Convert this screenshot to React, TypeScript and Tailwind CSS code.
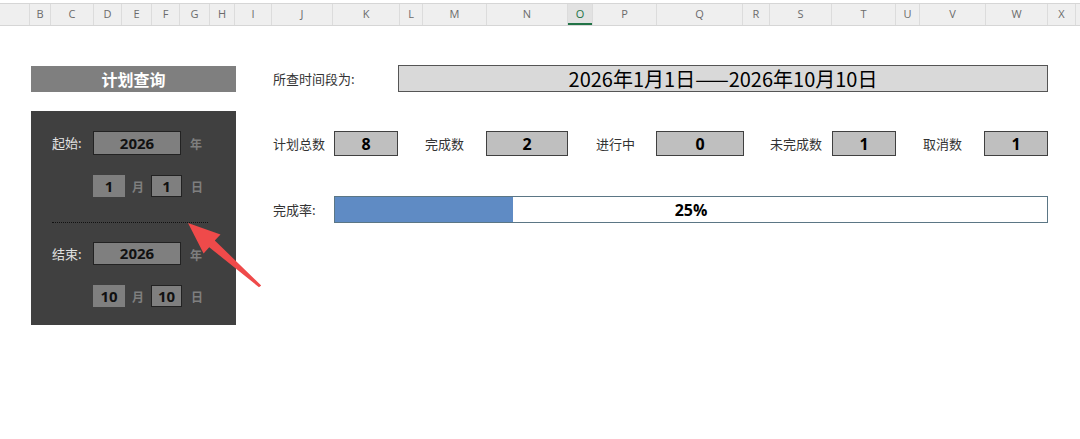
import React from "react";

const cols: { label: string; cls: string }[] = [
  { label: "", cls: "w-[30px]" },
  { label: "B", cls: "w-[21px]" },
  { label: "C", cls: "w-[43px]" },
  { label: "D", cls: "w-[28px]" },
  { label: "E", cls: "w-[30px]" },
  { label: "F", cls: "w-[28px]" },
  { label: "G", cls: "w-[30px]" },
  { label: "H", cls: "w-[25px]" },
  { label: "I", cls: "w-[37px]" },
  { label: "J", cls: "w-[61px]" },
  { label: "K", cls: "w-[67px]" },
  { label: "L", cls: "w-[23px]" },
  { label: "M", cls: "w-[64px]" },
  { label: "N", cls: "w-[81px]" },
  { label: "O", cls: "w-[25px]" },
  { label: "P", cls: "w-[64px]" },
  { label: "Q", cls: "w-[86px]" },
  { label: "R", cls: "w-[27px]" },
  { label: "S", cls: "w-[62px]" },
  { label: "T", cls: "w-[64px]" },
  { label: "U", cls: "w-[24px]" },
  { label: "V", cls: "w-[66px]" },
  { label: "W", cls: "w-[62px]" },
  { label: "X", cls: "w-[28px]" },
];

const cjk = "font-['Noto_Sans_CJK_SC',sans-serif]";
const num = "font-['Open_Sans','Noto_Sans_CJK_SC',sans-serif]";

function Header() {
  return (
    <div className="pt-[3px]">
      <div className="flex h-[23px] bg-[#efefef] border-t border-b border-[#d6d6d6]">
        {cols.map((c, i) => {
          const sel = c.label === "O";
          return (
            <div
              key={i}
              className={`${c.cls} shrink-0 h-full flex items-center justify-center border-r border-[#dcdcdc] text-[11px] font-['Open_Sans',sans-serif] relative ${
                sel ? "bg-[#e2e2e2] text-[#217346]" : "text-[#6b6b6b]"
              }`}
            >
              {c.label}
              {sel && <div className="absolute left-0 right-0 bottom-0 h-[2px] bg-[#217346]" />}
            </div>
          );
        })}
        <div className="flex-1" />
      </div>
    </div>
  );
}

function GrayBox({ w, children, border = true }: { w: string; children: React.ReactNode; border?: boolean }) {
  return (
    <div
      className={`${w} h-full bg-[#7f7f7f] flex items-center justify-center text-[15px] font-bold text-[#111] ${num} ${
        border ? "border border-[#222]" : ""
      }`}
    >
      {children}
    </div>
  );
}

function Unit({ children }: { children: React.ReactNode }) {
  return <span className={`text-[12px] font-bold text-[#7f7f7f] ${cjk}`}>{children}</span>;
}

function LeftPanel() {
  return (
    <div className="ml-[31px] w-[205px] shrink-0 pt-[40px]">
      <div className={`h-[26px] bg-[#7f7f7f] flex items-center justify-center text-white font-bold text-[16px] ${cjk}`}>
        计划查询
      </div>
      <div className="mt-[19px] bg-[#404040] h-[214px] pt-[20px]">
        <div className="flex items-center h-[24px]">
          <div className={`w-[62px] pl-[21px] text-[13px] text-[#e2e2e2] ${cjk}`}>起始:</div>
          <GrayBox w="w-[88px]">2026</GrayBox>
          <div className="ml-[9px]">
            <Unit>年</Unit>
          </div>
        </div>
        <div className="flex items-center h-[22px] mt-[20px] pl-[62px]">
          <GrayBox w="w-[32px]" border={false}>1</GrayBox>
          <div className="ml-[7px] w-[19px]">
            <Unit>月</Unit>
          </div>
          <GrayBox w="w-[31px]">1</GrayBox>
          <div className="ml-[9px]">
            <Unit>日</Unit>
          </div>
        </div>
        <div className="mt-[25px] ml-[21px] w-[156px] border-t border-dotted border-[#111]" />
        <div className="flex items-center h-[23px] mt-[19px]">
          <div className={`w-[62px] pl-[21px] text-[13px] text-[#e2e2e2] ${cjk}`}>结束:</div>
          <GrayBox w="w-[88px]">2026</GrayBox>
          <div className="ml-[9px]">
            <Unit>年</Unit>
          </div>
        </div>
        <div className="flex items-center h-[22px] mt-[20px] pl-[62px]">
          <GrayBox w="w-[32px]" border={false}>10</GrayBox>
          <div className="ml-[7px] w-[19px]">
            <Unit>月</Unit>
          </div>
          <GrayBox w="w-[31px]">10</GrayBox>
          <div className="ml-[9px]">
            <Unit>日</Unit>
          </div>
        </div>
      </div>
    </div>
  );
}

function StatBox({ w, children }: { w: string; children: React.ReactNode }) {
  return (
    <div
      className={`${w} h-full bg-[#bfbfbf] border border-[#404040] flex items-center justify-center text-[16px] font-bold text-black ${num}`}
    >
      {children}
    </div>
  );
}

function StatLabel({ children, pl }: { children: React.ReactNode; pl: string }) {
  return <div className={`w-[88px] ${pl} text-[13px] text-[#333] ${cjk}`}>{children}</div>;
}

function RightArea() {
  return (
    <div className="ml-[36px] pt-[39px]">
      <div className="flex items-center h-[27px]">
        <div className={`w-[126px] pl-[1px] text-[13px] text-[#333] ${cjk}`}>所查时间段为:</div>
        <div
          className={`w-[650px] h-full bg-[#d9d9d9] border border-[#555] flex items-center justify-center text-[20px] text-black ${cjk}`}
        >
          2026年1月1日——2026年10月10日
        </div>
      </div>
      <div className="flex items-center h-[25px] mt-[39px]">
        <div className={`w-[62px] pl-[1px] text-[13px] text-[#333] ${cjk}`}>计划总数</div>
        <StatBox w="w-[64px]">8</StatBox>
        <StatLabel pl="pl-[27px]">完成数</StatLabel>
        <StatBox w="w-[82px]">2</StatBox>
        <StatLabel pl="pl-[28px]">进行中</StatLabel>
        <StatBox w="w-[88px]">0</StatBox>
        <StatLabel pl="pl-[26px]">未完成数</StatLabel>
        <StatBox w="w-[64px]">1</StatBox>
        <StatLabel pl="pl-[27px]">取消数</StatLabel>
        <StatBox w="w-[64px]">1</StatBox>
      </div>
      <div className="flex items-center h-[27px] mt-[40px]">
        <div className={`w-[62px] pl-[1px] text-[13px] text-[#333] ${cjk}`}>完成率:</div>
        <div className="w-[714px] h-full border border-[#5b7685] bg-white relative flex items-center justify-center">
          <div className="absolute left-0 top-0 bottom-0 w-[25%] bg-[#5f8bc4]" />
          <span className={`relative text-[16px] font-bold text-black ${num}`}>25%</span>
        </div>
      </div>
    </div>
  );
}

function Arrow() {
  const pts = [
    [188, 223],
    [220.5, 234.5],
    [214.8, 240.6],
    [261.2, 285.4],
    [259.0, 287.2],
    [209.2, 247.2],
    [203.6, 253.6],
  ]
    .map((p) => p.join(","))
    .join(" ");
  return (
    <svg className="absolute left-0 top-0 pointer-events-none" width="1080" height="439" viewBox="0 0 1080 439">
      <polygon points={pts} fill="#ef4a4a" />
    </svg>
  );
}

export default function App() {
  return (
    <div className="relative w-[1080px] h-[439px] bg-white overflow-hidden">
      <Header />
      <div className="flex">
        <LeftPanel />
        <RightArea />
      </div>
      <Arrow />
    </div>
  );
}
